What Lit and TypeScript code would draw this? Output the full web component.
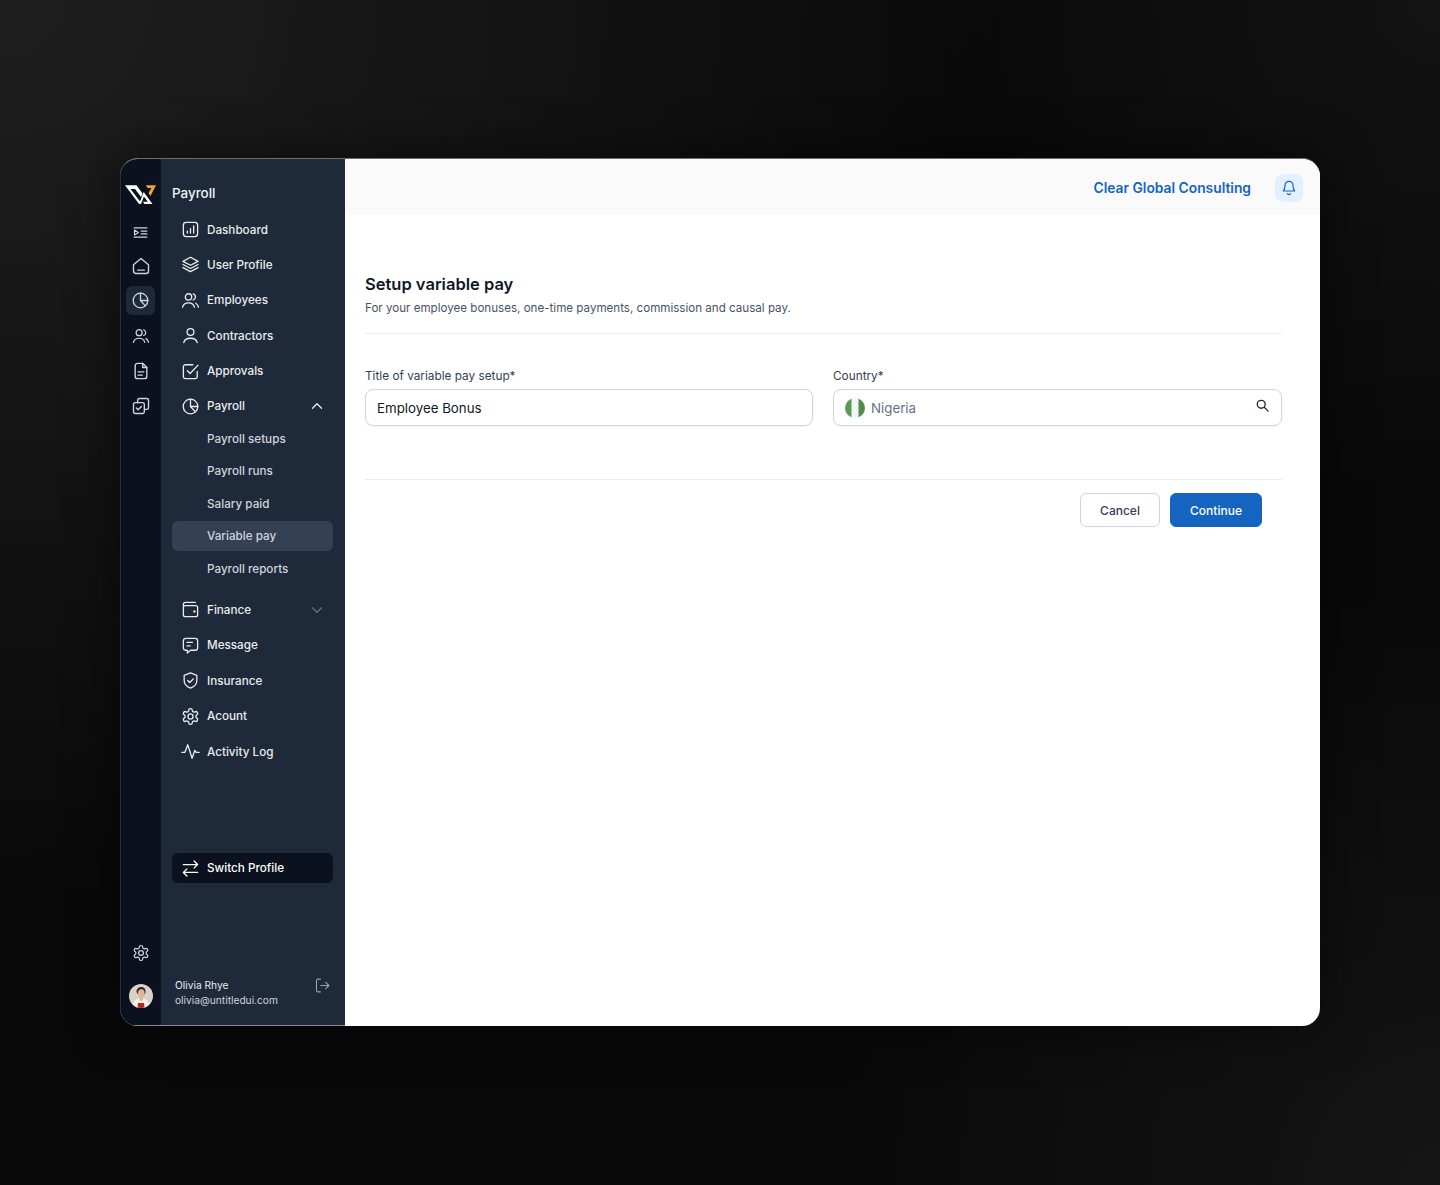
import { LitElement, html, css, svg } from "lit";
import { customElement } from "lit/decorators.js";

const gear = svg`<path d="M12.22 2h-.44a2 2 0 0 0-2 2v.18a2 2 0 0 1-1 1.73l-.43.25a2 2 0 0 1-2 0l-.15-.08a2 2 0 0 0-2.73.73l-.22.38a2 2 0 0 0 .73 2.73l.15.1a2 2 0 0 1 1 1.72v.51a2 2 0 0 1-1 1.74l-.15.09a2 2 0 0 0-.73 2.73l.22.38a2 2 0 0 0 2.73.73l.15-.08a2 2 0 0 1 2 0l.43.25a2 2 0 0 1 1 1.73V20a2 2 0 0 0 2 2h.44a2 2 0 0 0 2-2v-.18a2 2 0 0 1 1-1.73l.43-.25a2 2 0 0 1 2 0l.15.08a2 2 0 0 0 2.73-.73l.22-.39a2 2 0 0 0-.73-2.73l-.15-.08a2 2 0 0 1-1-1.74v-.5a2 2 0 0 1 1-1.74l.15-.09a2 2 0 0 0 .73-2.73l-.22-.38a2 2 0 0 0-2.73-.73l-.15.08a2 2 0 0 1-2 0l-.43-.25a2 2 0 0 1-1-1.73V4a2 2 0 0 0-2-2z"/><circle cx="12" cy="12" r="3.2"/>`;

const icons: Record<string, unknown> = {
  menu: svg`<path d="M3 5.500h18M13 10h8M13 14h8M3 18.500h18"/><path d="M3.500 8.500 9 12l-5.500 3.500z"/>`,
  home: svg`<path d="M3 10.500 12 3l9 7.500V18a3 3 0 0 1-3 3H6a3 3 0 0 1-3-3z"/><path d="M8 17h8"/>`,
  pie: svg`<circle cx="12" cy="12" r="9.200"/><path d="M12 2.800V12h9.200"/><path d="m12 12 6.200 6.800"/>`,
  users: svg`<circle cx="9.500" cy="7.500" r="4"/><path d="M2 20.500c.8-3.800 3.800-5.500 7.500-5.500s6.700 1.700 7.500 5.500"/><path d="M15.500 3.700a4 4 0 0 1 0 7.600"/><path d="M18.500 15.500c1.800.8 3 2.500 3.500 5"/>`,
  doc: svg`<path d="M14 2.800H8a3 3 0 0 0-3 3v12.400a3 3 0 0 0 3 3h8a3 3 0 0 0 3-3V7.800z"/><path d="M14 2.800v5h5M8.500 13h7M8.500 17h5"/>`,
  copy: svg`<path d="M8 8V5a2 2 0 0 1 2-2h9a2 2 0 0 1 2 2v9a2 2 0 0 1-2 2h-3"/><rect x="3" y="8" width="13" height="13" rx="2"/><path d="m6.500 14.500 2 2 4-4"/>`,
  chart: svg`<rect x="3" y="3" width="18" height="18" rx="3.500"/><path d="M8 16.500v-2.500M12 16.500V11M16 16.500V7.500"/>`,
  layers: svg`<path d="M12 2.800 21.500 8 12 13 2.500 8z"/><path d="M2.500 12 12 17l9.500-5"/><path d="M2.500 16 12 21l9.500-5"/>`,
  user: svg`<circle cx="12" cy="7.500" r="4.300"/><path d="M3.500 21c.8-3.900 4.200-5.500 8.500-5.500s7.700 1.600 8.500 5.500"/>`,
  check: svg`<path d="M20.500 12v6.500a2.500 2.500 0 0 1-2.500 2.500H5.500A2.500 2.500 0 0 1 3 18.500V6a2.500 2.500 0 0 1 2.500-2.500H15"/><path d="m8 11 3.500 3.500L21.500 4"/>`,
  wallet: svg`<path d="M3 7.500V5.500A2.500 2.500 0 0 1 5.500 3H18"/><rect x="3" y="7" width="18" height="14" rx="2.500"/><circle cx="17" cy="14.500" r=".7"/>`,
  message: svg`<path d="M6 3h12a3 3 0 0 1 3 3v9a3 3 0 0 1-3 3h-6l-4 3.500V18H6a3 3 0 0 1-3-3V6a3 3 0 0 1 3-3z"/><path d="M7.500 8h7M7.500 12.500h4"/>`,
  shield: svg`<path d="M12 2.500 20 5.500v6.500c0 5-3.500 8-8 9.700-4.500-1.700-8-4.700-8-9.700V5.500z"/><path d="m8.500 12 2.500 2.500 4.500-4.500"/>`,
  gear,
  activity: svg`<path d="M1 13h4l3.500-9.500 5.500 17L17.500 10.500 19 13h4"/>`,
  swap: svg`<path d="M3 7h18M16.500 2.500 21 7l-4.500 4.500"/><path d="M21 17H3M7.500 12.500 3 17l4.500 4.500"/>`,
  logout: svg`<path d="M9 3H6a2.500 2.500 0 0 0-2.500 2.500v13A2.500 2.500 0 0 0 6 21h3"/><path d="M9.500 12H21M16.500 7.500 21 12l-4.500 4.500"/>`,
  up: svg`<path d="m6 15 6-6 6 6"/>`,
  down: svg`<path d="m6 9 6 6 6-6"/>`,
  bell: svg`<path d="M18 8a6 6 0 0 0-12 0c0 6-2.500 8.500-2.500 8.500h17S18 14 18 8z"/><path d="M9.500 20.500a3 3 0 0 0 5 0"/>`,
  search: svg`<circle cx="10" cy="10" r="6.300"/><path d="m15 15 6 6"/>`,
};

const icon = (n: string) =>
  html`<svg class="ic" viewBox="0 0 24 24" fill="none" stroke="currentColor" stroke-linecap="round" stroke-linejoin="round">${icons[n]}</svg>`;

const topItems: [string, string][] = [
  ["chart", "Dashboard"],
  ["layers", "User Profile"],
  ["users", "Employees"],
  ["user", "Contractors"],
  ["check", "Approvals"],
];
const subItems = ["Payroll setups", "Payroll runs", "Salary paid", "Variable pay", "Payroll reports"];
const lowerItems: [string, string][] = [
  ["message", "Message"],
  ["shield", "Insurance"],
  ["gear", "Acount"],
  ["activity", "Activity Log"],
];

@customElement("app-root")
export class AppRoot extends LitElement {
  static styles = css`
    :host {
      display: block;
      min-height: 100vh;
      box-sizing: border-box;
      padding: 158px 120px 159px;
      background:
        radial-gradient(1000px 900px at 0 0, #1f1f1f 0%, rgba(31, 31, 31, 0) 100%),
        radial-gradient(600px 600px at 100% 100%, #151515 0%, rgba(21, 21, 21, 0) 100%),
        radial-gradient(500px 500px at 100% 0, #131313 0%, rgba(19, 19, 19, 0) 100%),
        #090909;
      font-family: Inter, "Liberation Sans", sans-serif;
    }
    * { box-sizing: border-box; }
    .ic { display: block; width: 19px; height: 19px; stroke-width: 1.65; flex: none; }
    .window {
      display: flex;
      height: 868px;
      border-radius: 18px;
      overflow: hidden;
      background: #fff;
      border-top: 1px solid #6e6e6e;
      box-shadow: 0 0 50px rgba(0, 0, 0, 0.55);
    }
    .rail {
      width: 41px;
      flex: none;
      background: #0b111e;
      color: #d0d5dd;
      display: flex;
      flex-direction: column;
      align-items: center;
      padding: 24px 1px 17px 0;
      border-left: 1px solid #2a2f3c;
      border-bottom: 1px solid #858a92;
    }
    .logo { width: 32px; height: 22px; display: block; margin-bottom: 12.5px; }
    .rail-btn {
      width: 29px;
      height: 29px;
      border-radius: 6px;
      display: flex;
      align-items: center;
      justify-content: center;
      margin-bottom: 6px;
    }
    .rail-btn .ic { width: 18px; height: 18px; }
    .rail-btn.first { margin-bottom: 4.5px; }
    .rail-btn.first .ic { width: 17px; height: 17px; }
    .rail-btn.on { background: #1d2939; }
    .rail-btn.on .ic { width: 19px; height: 19px; }
    .rail-btn.tall .ic { width: 20px; height: 20px; }
    .spacer { flex: 1; }
    .rail-btn.last { margin-bottom: 16.5px; }
    .avatar { width: 24px; height: 24px; display: block; border-radius: 50%; }

    .side {
      width: 184px;
      flex: none;
      background: #1e2939;
      padding: 24px 12px 17px 11px;
      display: flex;
      flex-direction: column;
      color: #eaecf0;
      border-bottom: 1px solid #858a92;
    }
    .side-title { font-size: 13.4px; line-height: 20px; font-weight: 500; color: #f2f4f7; margin-bottom: 11.5px; }
    nav { display: flex; flex-direction: column; gap: 5.4px; }
    .item {
      display: flex;
      align-items: center;
      height: 30px;
      padding: 0 7px 0 8.5px;
      gap: 7.5px;
      font-size: 11.7px;
      font-weight: 500;
      color: #eaecf0;
      border-radius: 6px;
    }
    .item .chev { margin-left: auto; width: 18px; height: 18px; }
    .item .chev.dim { color: #667085; }
    .subs { display: flex; flex-direction: column; gap: 2.5px; margin: -2.9px 0 5.6px; }
    .sub {
      height: 30px;
      display: flex;
      align-items: center;
      padding-left: 35px;
      font-size: 11.7px;
      font-weight: 500;
      color: #d0d5dd;
      border-radius: 6px;
    }
    .sub.on { background: #344054; }
    .switch {
      margin-top: 86.5px;
      background: #0b111e;
      color: #fff;
    }
    .user {
      margin-top: auto;
      display: flex;
      justify-content: space-between;
      padding: 0 2px 0 3px;
      font-size: 10.2px;
      line-height: 15px;
      color: #d0d5dd;
    }
    .user .name { color: #eaecf0; }
    .user .ic { width: 17px; height: 17px; color: #98a2b3; margin-top: -1px; stroke-width: 1.5; }

    main { flex: 1; min-width: 0; display: flex; flex-direction: column; }
    header {
      height: 56px;
      background: #fafafa;
      display: flex;
      align-items: center;
      justify-content: flex-end;
      padding: 1px 17px 0 0;
      gap: 24px;
    }
    .company { color: #1565c0; font-size: 13.8px; font-weight: 600; }
    .bell {
      width: 28px;
      height: 28px;
      border-radius: 8px;
      background: #e3f0ff;
      color: #1565c0;
      display: flex;
      align-items: center;
      justify-content: center;
    }
    .bell .ic { width: 16px; height: 16px; stroke-width: 1.8; }
    .content { padding: 56px 38px 0 20px; }
    h1 { margin: 0; font-size: 16.5px; line-height: 26px; font-weight: 600; color: #101828; }
    .desc { margin: 2px 0 0; font-size: 11.6px; line-height: 18px; color: #475467; }
    .rule { height: 1px; background: #eaecf0; }
    .rule.a { margin-top: 16px; }
    .rule.b { margin-top: 53px; }
    .fields { display: grid; grid-template-columns: 448px 449px; gap: 20px; margin-top: 33px; }
    label { display: block; font-size: 11.8px; line-height: 18px; color: #344054; margin-bottom: 4px; }
    .input {
      height: 37px;
      border: 1px solid #d0d5dd;
      border-radius: 8px;
      display: flex;
      align-items: center;
      padding: 0 11px;
      font-size: 13.3px;
      color: #101828;
      box-shadow: 0 1px 2px rgba(16, 24, 40, 0.05);
    }
    .input.country { color: #667085; gap: 6px; }
    .flag { width: 20px; height: 20px; display: block; flex: none; }
    .input .ic { margin-left: auto; width: 15px; height: 15px; color: #1d2939; stroke-width: 2.2; margin-top: -4px; }
    .actions { display: flex; justify-content: flex-end; gap: 10px; margin-top: 13px; padding-right: 20px; }
    .btn {
      height: 34px;
      border-radius: 6px;
      font: 500 12px Inter, "Liberation Sans", sans-serif;
      display: flex;
      align-items: center;
      justify-content: center;
    }
    .cancel { width: 80px; background: #fff; border: 1px solid #d0d5dd; color: #344054; }
    .go { width: 92px; background: #1565c0; border: 1px solid #1565c0; color: #fff; }
  `;

  render() {
    return html`
      <div class="window">
        <div class="rail">
          <svg class="logo" viewBox="0 0 32 22">
            <polygon fill="#fff" points="0,2.300 11.500,2.300 17.500,10.500 16,14 10,6 5.500,6 15.500,19 14,21"/>
            <polygon fill="#fff" points="14,21 18.700,9 27.500,21 19.500,21 17.900,18.700 22.800,18.700 18.900,13.500 16,21"/>
            <polygon fill="#f5a431" points="21,2.300 31,2.300 25.500,13 23.500,10 26.500,5 22.500,5"/>
          </svg>
          <div class="rail-btn first">${icon("menu")}</div>
          <div class="rail-btn tall">${icon("home")}</div>
          <div class="rail-btn on">${icon("pie")}</div>
          <div class="rail-btn">${icon("users")}</div>
          <div class="rail-btn tall">${icon("doc")}</div>
          <div class="rail-btn tall">${icon("copy")}</div>
          <div class="spacer"></div>
          <div class="rail-btn last">${icon("gear")}</div>
          <svg class="avatar" viewBox="0 0 24 24">
            <rect width="24" height="24" fill="#d9d2c9"/>
            <path fill="#3a2a24" d="M7.500 8c0-3.500 2.200-5 4.800-5s4.500 1.800 4.200 5.500l-.7 2-7-.5z"/>
            <ellipse cx="12.300" cy="9.500" rx="3.300" ry="4.200" fill="#e2b49a"/>
            <path fill="#f3efea" d="M3 24c.5-6 3.500-9 7-9.500h4.500c3.500.5 6 4 6.500 9.500z"/>
            <path fill="#e2b49a" d="M10.500 12.500h3.500v3l-1.700 2-1.800-2z"/>
            <path fill="#b3261e" d="M9 19h6l.5 5h-7z"/>
          </svg>
        </div>
        <div class="side">
          <div class="side-title">Payroll</div>
          <nav>
            ${topItems.map(([i, t]) => html`<div class="item">${icon(i)}<span>${t}</span></div>`)}
            <div class="item">${icon("pie")}<span>Payroll</span><svg class="ic chev" viewBox="0 0 24 24" fill="none" stroke="currentColor" stroke-width="2" stroke-linecap="round" stroke-linejoin="round">${icons.up}</svg></div>
            <div class="subs">
              ${subItems.map((s) => html`<div class="sub ${s === "Variable pay" ? "on" : ""}">${s}</div>`)}
            </div>
            <div class="item">${icon("wallet")}<span>Finance</span><svg class="ic chev dim" viewBox="0 0 24 24" fill="none" stroke="currentColor" stroke-width="1.500" stroke-linecap="round" stroke-linejoin="round">${icons.down}</svg></div>
            ${lowerItems.map(([i, t]) => html`<div class="item">${icon(i)}<span>${t}</span></div>`)}
          </nav>
          <div class="item switch">${icon("swap")}<span>Switch Profile</span></div>
          <div class="user">
            <div>
              <div class="name">Olivia Rhye</div>
              <div>olivia@untitledui.com</div>
            </div>
            ${icon("logout")}
          </div>
        </div>
        <main>
          <header>
            <span class="company">Clear Global Consulting</span>
            <div class="bell">${icon("bell")}</div>
          </header>
          <div class="content">
            <h1>Setup variable pay</h1>
            <p class="desc">For your employee bonuses, one-time payments, commission and causal pay.</p>
            <div class="rule a"></div>
            <div class="fields">
              <div>
                <label>Title of variable pay setup*</label>
                <div class="input">Employee Bonus</div>
              </div>
              <div>
                <label>Country*</label>
                <div class="input country">
                  <svg class="flag" viewBox="0 0 20 20">
                    <defs><clipPath id="fc"><circle cx="10" cy="10" r="10"/></clipPath></defs>
                    <g clip-path="url(#fc)">
                      <rect width="20" height="20" fill="#f2f4f7"/>
                      <rect width="6.500" height="20" fill="#5a9a55"/>
                      <rect x="13.500" width="6.500" height="20" fill="#4f8e4b"/>
                    </g>
                  </svg>
                  <span>Nigeria</span>
                  ${icon("search")}
                </div>
              </div>
            </div>
            <div class="rule b"></div>
            <div class="actions">
              <div class="btn cancel">Cancel</div>
              <div class="btn go">Continue</div>
            </div>
          </div>
        </main>
      </div>
    `;
  }
}
